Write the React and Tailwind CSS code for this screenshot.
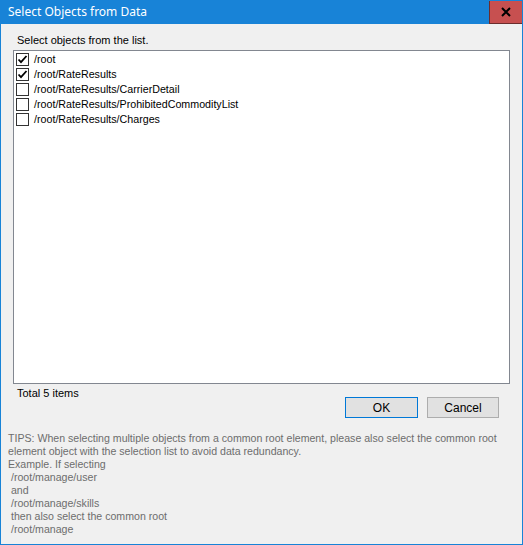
const items = [
  { path: '/root', checked: true },
  { path: '/root/RateResults', checked: true },
  { path: '/root/RateResults/CarrierDetail', checked: false },
  { path: '/root/RateResults/ProhibitedCommodityList', checked: false },
  { path: '/root/RateResults/Charges', checked: false },
];

const tips = [
  'TIPS: When selecting multiple objects from a common root element, please also select the common root',
  'element object with the selection list to avoid data redundancy.',
  'Example. If selecting',
  '\u00a0/root/manage/user',
  '\u00a0and',
  '\u00a0/root/manage/skills',
  '\u00a0then also select the common root',
  '\u00a0/root/manage',
];

const CheckBox = ({ checked }) => (
  <span className="w-[13px] h-[13px] border border-[#333] bg-white flex items-center justify-center shrink-0">
    {checked && (
      <svg width="11" height="11" viewBox="0 0 11 11">
        <path d="M1.5 5.5 L4 8.2 L9.5 2" fill="none" stroke="#000" strokeWidth="1.8" />
      </svg>
    )}
  </span>
);

export default function App() {
  return (
    <div
      className="w-[523px] h-[545px] flex flex-col border border-[#1883d7] bg-[#f0f0f0] text-[11px] text-black overflow-hidden"
      style={{ fontFamily: '"Liberation Sans", Arial, sans-serif' }}
    >
      {/* title bar */}
      <div className="h-[24px] shrink-0 bg-[#1883d7] flex items-stretch -mt-px -mx-px">
        <div className="flex-1 pl-[8px] flex items-center text-white text-[12px]" style={{ fontFamily: '"Noto Sans", "Open Sans", sans-serif' }}>
          Select Objects from Data
        </div>
        <div className="w-[34px] bg-[#c75050] border border-[#6b2d2d] flex items-center justify-center">
          <svg width="10" height="10" viewBox="0 0 10 10">
            <path d="M1 1 L9 9 M9 1 L1 9" stroke="#000" strokeWidth="2" />
          </svg>
        </div>
      </div>

      <div className="flex-1 flex flex-col px-[12px]">
        <div className="shrink-0 pl-[4px] pt-[10px] h-[26px] leading-[13px]">Select objects from the list.</div>
        <div className="shrink-0 h-[334px] bg-white border border-[#828790] pt-[1px] pl-[2px]">
          {items.map((it) => (
            <div key={it.path} className="h-[15px] flex items-center gap-[5px]">
              <CheckBox checked={it.checked} />
              <span className="leading-[13px] text-[10.7px]">{it.path}</span>
            </div>
          ))}
        </div>
        <div className="shrink-0 pl-[4px] pt-[3px] leading-[13px] h-[16px]">Total 5 items</div>
        <div className="shrink-0 -mt-[3px] flex justify-end gap-[9px] pr-[11px] h-[21px]">
          <button className="w-[73px] h-[21px] bg-[#e1e1e1] border border-[#0078d7] text-[12px]">OK</button>
          <button className="w-[72px] h-[21px] bg-[#e1e1e1] border border-[#adadad] text-[12px]">Cancel</button>
        </div>
        <div className="shrink-0 pt-[14px] -ml-[5px] text-[#6d6d6d] leading-[13px] text-[10.6px] whitespace-nowrap">
          {tips.map((t, i) => (
            <div key={i}>{t}</div>
          ))}
        </div>
      </div>
    </div>
  );
}
